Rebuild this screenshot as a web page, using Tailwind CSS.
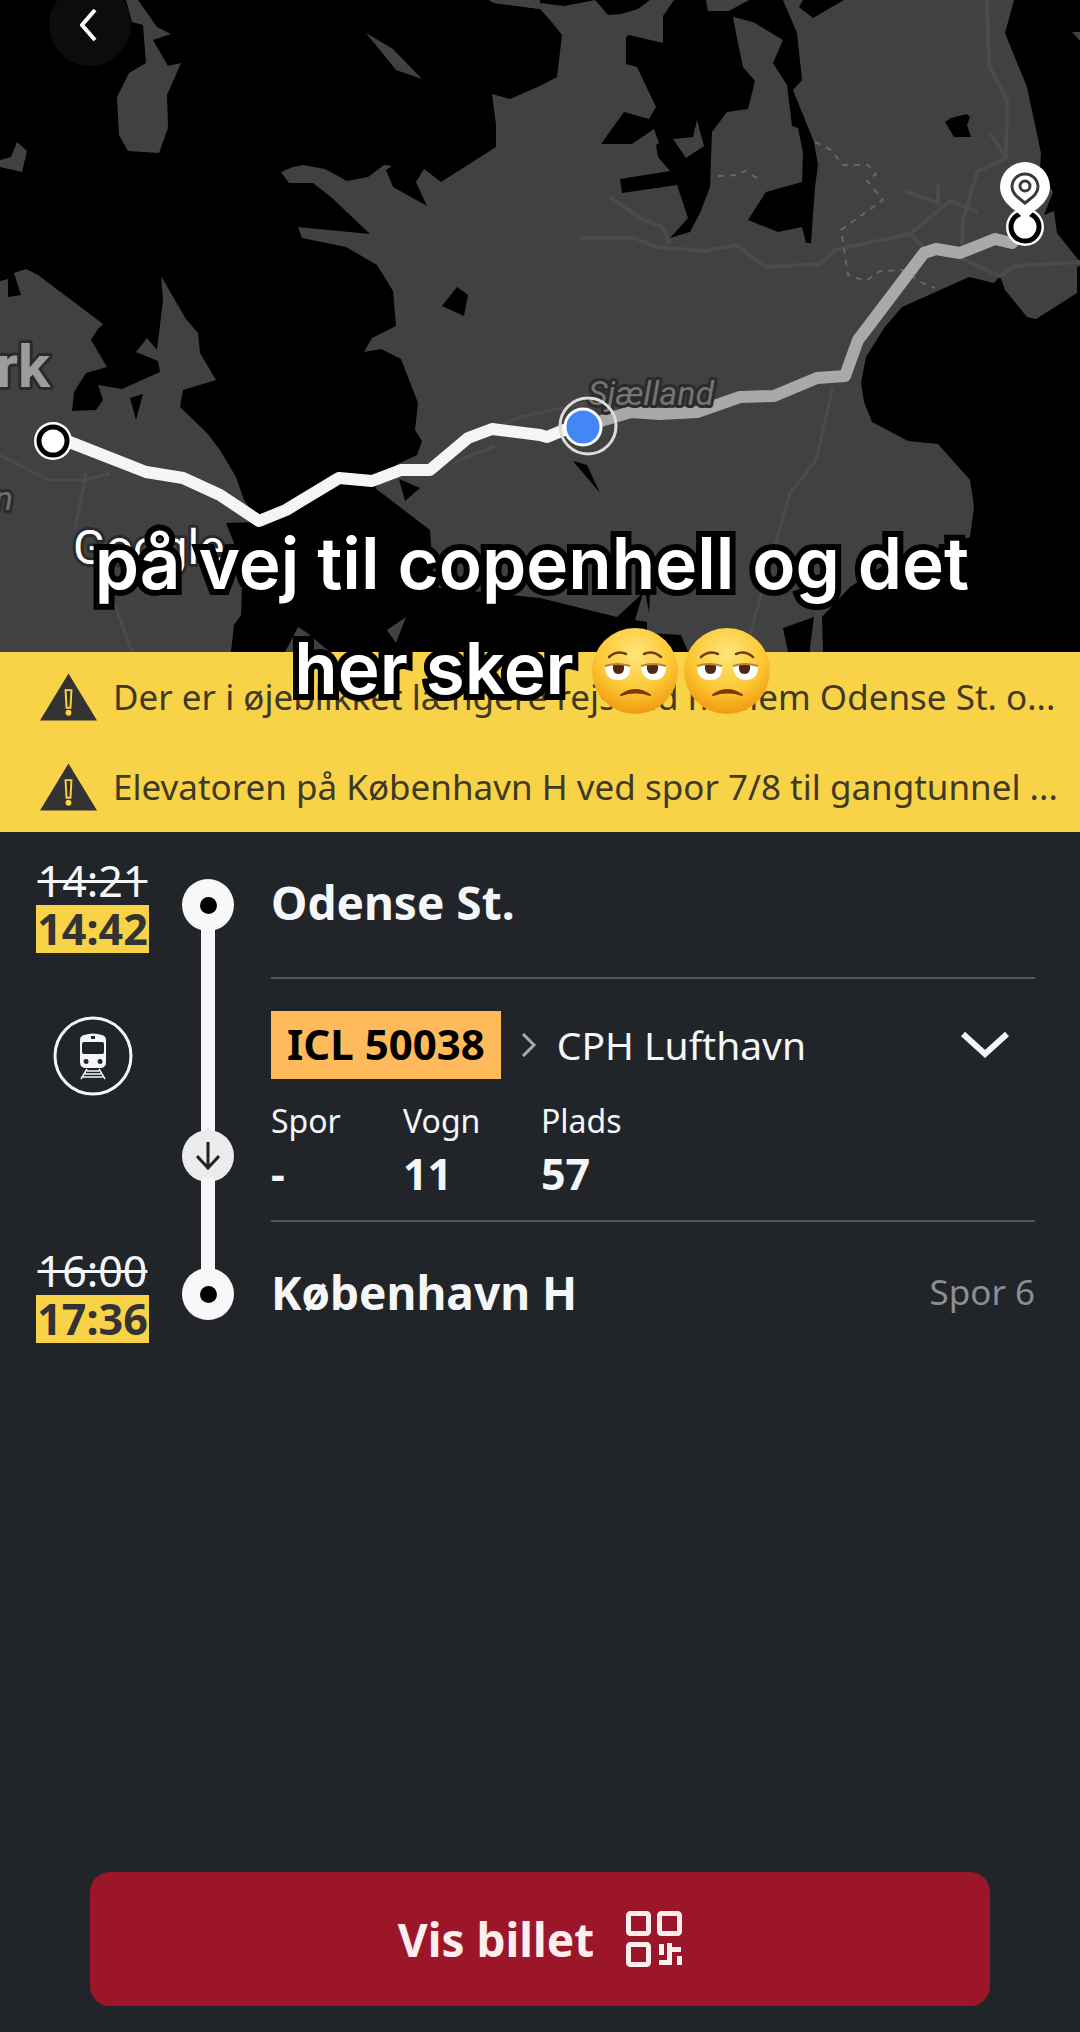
<!DOCTYPE html>
<html lang="da">
<head>
    <meta charset="UTF-8">
    <meta name="viewport" content="width=device-width, initial-scale=1.0">
    <title>Odense St. - København H</title>
    <script src="https://cdn.jsdelivr.net/npm/@tailwindcss/browser@4"></script>
</head>
<body class="bg-[#212529] text-[#f5f6f8] font-['Noto_Sans',sans-serif]">
    <div class="relative min-h-screen flex flex-col overflow-hidden">

        <!-- Map -->
        <header class="relative">
            <svg class="block w-full h-[652px]" viewBox="0 0 1080 652" preserveAspectRatio="xMidYMid slice" role="img" aria-label="Kort over rejsen">
                <rect width="1080" height="652" fill="#414141"/>

                <!-- Water -->
                <g fill="#000">
                    <path d="M0 0H489L494 3L540 9L550 20L562 35L557 77L540 86L510 99L492 94L496 125V147L441 182L424 169L416 182L427 206L393 187L386 170L392 166L384 165L368 177L347 181L325 169L303 165L293 167L281 172L289 183L313 183L331 197L370 234L298 227L302 238L346 247L377 265L393 291L396 326L372 338L364 352L381 349L401 359L418 403L415 430L422 441L417 455L396 465L375 488L430 530L434 587L540 598L617 617L643 593L635 620L647 622V633L681 635L688 652H231L234 625L241 615L242 587L234 543L226 523L259 522L244 500L236 477L220 450L207 433L180 407L183 390L216 380L200 353L198 333L186 319L161 276L163 300L157 350L147 338L136 352L158 361L160 372L122 389L98 385L103 400L96 410L72 411L74 392L86 373L107 367L91 340L98 329L103 324L38 275L26 269L14 273L21 295L8 297V279L0 281Z"/>
                    <path d="M540 0V3L564 6L595 0L608 15L621 14L638 9L650 0Z"/>
                    <path d="M674 0L663 16V43L629 35L626 37V64L637 67L656 107L649 119L624 112L601 144H632L654 129L659 143L656 145L658 157L670 171L620 179L622 193L677 185L688 218L670 238L690 232L700 213L710 187L712 132L727 112L748 109L755 81L743 67L738 43L733 17L753 22L783 40L773 63L787 85L792 126L798 128L803 153L802 182L766 192L748 220L778 232L802 227L806 243H811L815 187L818 165L814 142L793 90L802 80L797 33L783 0H749L729 11H708L706 0Z"/>
                    <path d="M803 0L799 7L813 18L844 0Z"/>
                    <path d="M945 122L951 118L967 114L970 117L967 125L971 137H954Z"/>
                    <path d="M1014 0L1005 33L1027 87L1041 153L1040 170L1053 192L1044 215L1054 211L1057 233L1080 262V0Z"/>
                    <path d="M1080 266L1077 267V293L1036 319L1027 317L1005 290L1000 276L994 283L969 277L902 307L884 328L866 357L861 383L864 402L872 422L908 441L938 444L970 480L974 507L970 537L881 567L850 587L822 617L823 652H1080Z"/>
                    <path d="M783 628L814 617L810 648V652H788Z"/>
                    <path d="M457 287L468 295L464 316L442 306Z"/>
                    <path d="M130 398L143 394L136 420Z"/>
                    <path d="M399 479L420 488L405 501Z"/>
                    <path d="M573 461L587 465L600 493Z"/>
                    <path d="M645 590H650L649 613Z"/>
                </g>

                <!-- Islands -->
                <g fill="#414141">
                    <path d="M126 0L132 22L143 25L146 63L129 73L117 97L119 135L128 151L159 153L168 128L167 95L181 63L168 66L153 40L171 34L157 27L138 0Z"/>
                    <path d="M17 142L27 151L22 172L0 167V160L11 157Z"/>
                    <path d="M366 33L393 49L422 79L396 70Z"/>
                    <path d="M489 0L494 3L540 9V0Z"/>
                    <path d="M673 139L693 137L697 120L704 146L686 158Z"/>
                    <path d="M1072 32H1080V41Z"/>
                    <path d="M285 652L298 627L306 632L330 652Z"/>
                    <path d="M387 630L406 617L396 643Z"/>
                </g>

                <!-- Roads and municipal borders -->
                <g fill="none" stroke="#4b4b4b" stroke-width="4" stroke-linejoin="round">
                    <path d="M580 238H635L655 247L705 251L736 245L766 267L820 264L835 250L910 234L950 201L978 212M610 197L640 218L662 227L670 243"/>
                    <path d="M987 0L989 66L1007 100L1006 158L977 172L963 220L962 245M990 133L1006 158M905 191L938 203V185M910 234L926 250M960 258L1000 276L1014 266L1080 262"/>
                    <path d="M833 387L816 460L790 493L775 545L750 635M0 455L48 480H86L110 473M86 473L75 530M115 605L132 652M492 429L520 417L600 400M455 462L495 446" stroke-width="3"/>
                </g>
                <g fill="none" stroke="#666" stroke-width="2" stroke-dasharray="6 6">
                    <path d="M815 142L831 150L843 165L868 165L876 174L867 181L883 200L841 230L848 275L866 281L880 271L903 270L920 282L935 288"/>
                    <path d="M718 176L738 175L745 171L762 181"/>
                </g>

                <!-- Route -->
                <g fill="none" stroke-width="12" stroke-linejoin="round">
                    <path stroke="#a9a9a9" d="M584 428L604 420L631 412L660 414L697 412L740 397L774 396L817 378L845 376L858 340L877 315L924 253L936 249L960 253L995 239L1012 243L1025 228"/>
                    <path stroke="#f5f5f5" d="M53 436L72 443L146 472L183 478L220 495L259 521L286 510L339 478L372 481L401 470H430L468 438L492 429L540 435L547 437L564 430L583 428"/>
                </g>

                <!-- Place names -->
                <g font-family="Roboto, sans-serif" stroke="#2b2b2b" stroke-width="6" stroke-linejoin="round" paint-order="stroke">
                    <text x="50" y="387" font-size="60" font-weight="700" text-anchor="end" fill="#9c9c9c">rk</text>
                    <text x="13" y="510" font-size="34" font-style="italic" text-anchor="end" fill="#6f6f6f">n</text>
                    <text x="588" y="405" font-size="34" font-style="italic" fill="#747474">Sjælland</text>
                    <text x="73" y="564" font-size="48" fill="#fff">Google</text>
                </g>

                <!-- Stops -->
                <g fill="#fff">
                    <circle cx="53" cy="441" r="19"/>
                    <circle cx="53" cy="441" r="14" stroke="#000" stroke-width="5"/>
                    <circle cx="1025" cy="227" r="19"/>
                    <circle cx="1025" cy="227" r="14" stroke="#000" stroke-width="5"/>
                    <path d="M1025 162a25 25 0 0 1 25 25c0 12-10 20-17 25l-8 8-8-8c-7-5-17-13-17-25a25 25 0 0 1 25-25z"/>
                </g>
                <g fill="none" stroke="#3a3a3a" stroke-width="3">
                    <path d="M1025 174a13 13 0 0 1 13 13c0 7-7 11-13 16-6-5-13-9-13-16a13 13 0 0 1 13-13z"/>
                    <circle cx="1025" cy="186" r="5"/>
                </g>

                <!-- Current position -->
                <circle cx="588" cy="426" r="28" fill="none" stroke="#dcdcdc" stroke-width="3"/>
                <circle cx="583" cy="427" r="18" fill="#4287f5" stroke="#fff" stroke-width="3"/>
            </svg>

            <button type="button" aria-label="Tilbage" class="absolute left-[49px] -top-4 size-[82px] rounded-full bg-[#0c0c0f] flex items-center justify-center">
                <svg class="w-5 h-8" viewBox="0 0 20 32" fill="none" stroke="#fff" stroke-width="4">
                    <path d="M15 1L2 16L15 31"/>
                </svg>
            </button>
        </header>

        <!-- Traffic messages -->
        <ul class="bg-[#f8d348] text-[#3f3a26] text-[35px]">
            <li class="h-[90px] pl-10 pr-2 flex items-center gap-4">
                <svg class="w-[57px] h-12 shrink-0" viewBox="0 0 58 48">
                    <path d="M29 0L58 48H0Z" fill="#333"/>
                    <path d="M26 17h6l-1 18h-4z" fill="none" stroke="#f8d348" stroke-width="2"/>
                    <circle cx="29" cy="40" r="3" fill="#f8d348"/>
                </svg>
                <a href="#" class="truncate">Der er i øjeblikket længere rejsetid mellem Odense St. o...</a>
            </li>
            <li class="h-[90px] pl-10 pr-2 flex items-center gap-4">
                <svg class="w-[57px] h-12 shrink-0" viewBox="0 0 58 48">
                    <path d="M29 0L58 48H0Z" fill="#333"/>
                    <path d="M26 17h6l-1 18h-4z" fill="none" stroke="#f8d348" stroke-width="2"/>
                    <circle cx="29" cy="40" r="3" fill="#f8d348"/>
                </svg>
                <a href="#" class="truncate">Elevatoren på København H ved spor 7/8 til gangtunnel ...</a>
            </li>
        </ul>

        <!-- Journey -->
        <main class="flex-1 pl-9 pr-[45px]">
            <div class="grid grid-cols-[113px_52px_1fr] grid-rows-[145px_245px_145px]">
                <div class="col-start-1 row-start-1 self-center flex flex-col items-center text-[43px] leading-[48px]">
                    <s class="decoration-3">14:21</s>
                    <strong class="w-full text-center bg-[#f8d348] text-[#333]">14:42</strong>
                </div>
                <div class="col-start-1 row-start-2 pt-[39px] flex justify-center">
                    <svg class="size-20" viewBox="0 0 80 80" role="img" aria-label="Tog">
                        <circle cx="40" cy="40" r="38" fill="none" stroke="#f5f6f8" stroke-width="3"/>
                        <path fill="#f5f6f8" fill-rule="evenodd" d="M31 19q9-3 18 0q4 1 4 5v22q0 6-6 6H33q-6 0-6-6V24q0-4 4-5zM38 20v3h4v-3zM31 26q-2 0-2 2v8q0 2 2 2h18q2 0 2-2v-8q0-2-2-2zM33 43a2 2 0 1 0 0.100 5a2 2 0 1 0-.100-5zM47 43a2 2 0 1 0 0.100 5a2 2 0 1 0-.100-5z"/>
                        <path d="M34 53L28 63M46 53L52 63M34 55H46M32 58H48M30 61H50" fill="none" stroke="#f5f6f8" stroke-width="1.500"/>
                    </svg>
                </div>
                <div class="col-start-1 row-start-3 self-center flex flex-col items-center text-[43px] leading-[48px]">
                    <s class="decoration-3">16:00</s>
                    <strong class="w-full text-center bg-[#f8d348] text-[#333]">17:36</strong>
                </div>

                <!-- Line with stops -->
                <div class="col-start-2 row-start-1 row-span-3 w-[52px] ml-[33px] py-[47px] flex flex-col items-center">
                    <span class="size-[52px] rounded-full bg-[#f8f8f8] flex items-center justify-center"><span class="size-[17px] rounded-full bg-black"></span></span>
                    <span class="-my-1 flex-1 w-[14px] bg-[#f8f8f8]"></span>
                    <span class="size-[52px] rounded-full bg-[#ececee] flex items-center justify-center">
                        <svg class="w-6 h-7" viewBox="0 0 24 28" fill="none" stroke="#222" stroke-width="3">
                            <path d="M12 0V26M1 14L12 26L23 14"/>
                        </svg>
                    </span>
                    <span class="-my-1 h-[94px] w-[14px] bg-[#f8f8f8]"></span>
                    <span class="size-[52px] rounded-full bg-[#f8f8f8] flex items-center justify-center"><span class="size-[17px] rounded-full bg-black"></span></span>
                </div>

                <h2 class="col-start-3 row-start-1 ml-[70px] pb-1 self-center text-[46px] font-bold">Odense St.</h2>

                <section class="col-start-3 row-start-2 ml-[70px] border-y-2 border-[#54575b] pt-8">
                    <div class="flex items-center">
                        <strong class="h-[68px] px-4 bg-[#ffba5c] text-black text-[42px] leading-[66px]">ICL 50038</strong>
                        <svg class="ml-5 w-4 h-6" viewBox="0 0 16 24" fill="none" stroke="#a6a8ab" stroke-width="3">
                            <path d="M2 1L13 12L2 23"/>
                        </svg>
                        <span class="ml-5 text-[39px] leading-[66px]">CPH Lufthavn</span>
                        <button type="button" aria-label="Vis stop" class="ml-auto mr-[26px]">
                            <svg class="w-12 h-7" viewBox="0 0 48 28" fill="none" stroke="#f5f6f8" stroke-width="6">
                                <path d="M2 3L24 23L46 3"/>
                            </svg>
                        </button>
                    </div>
                    <dl class="mt-4 grid grid-cols-[132px_138px_1fr]">
                        <div>
                            <dt class="text-[32px] leading-[52px]">Spor</dt>
                            <dd class="text-[43px] leading-[54px] font-bold">-</dd>
                        </div>
                        <div>
                            <dt class="text-[32px] leading-[52px]">Vogn</dt>
                            <dd class="text-[43px] leading-[54px] font-bold">11</dd>
                        </div>
                        <div>
                            <dt class="text-[32px] leading-[52px]">Plads</dt>
                            <dd class="text-[43px] leading-[54px] font-bold">57</dd>
                        </div>
                    </dl>
                </section>

                <div class="col-start-3 row-start-3 ml-[70px] pb-1 flex items-center justify-between">
                    <h2 class="text-[46px] font-bold">København H</h2>
                    <span class="text-[35px] text-[#8b8e92]">Spor 6</span>
                </div>
            </div>
        </main>

        <footer class="px-[90px] pb-[26px]">
            <button type="button" class="w-full h-[134px] rounded-[20px] bg-[#9c162a] text-[#fdeeee] text-[46px] font-bold flex items-center justify-center gap-8">
                Vis billet
                <svg class="size-14" viewBox="0 0 56 56" fill="none" stroke="#fdeeee" stroke-width="5">
                    <rect x="2.500" y="2.500" width="20" height="20" rx="2"/>
                    <rect x="33.500" y="2.500" width="20" height="20" rx="2"/>
                    <rect x="2.500" y="33.500" width="20" height="20" rx="2"/>
                    <path d="M35.500 33V44M33 51.500H43.500V32M43 38.500H55M53.500 45V54" stroke-width="5"/>
                </svg>
            </button>
        </footer>

        <!-- Caption -->
        <p class="absolute inset-x-0 top-[511px] pr-4 text-center font-['Inter',sans-serif] font-semibold text-[71px] leading-[105px] text-white [-webkit-text-stroke:12px_#000] [paint-order:stroke] [stroke-linejoin:round]">
            på vej til copenhell og det<br>
            her sker
            <svg class="inline-block align-middle mb-2 w-[178px] h-[86px]" viewBox="0 0 178 86" role="img" aria-label="To trætte ansigter">
                <defs>
                    <radialGradient id="skin" cx="50%" cy="30%" r="75%">
                        <stop offset="0" stop-color="#ffe57a"/>
                        <stop offset=".55" stop-color="#fdc937"/>
                        <stop offset="1" stop-color="#ee9209"/>
                    </radialGradient>
                    <g id="face">
                        <circle cx="43" cy="43" r="43" fill="url(#skin)"/>
                        <path d="M17 29q8-7 17-3M52 26q9-4 17 3" fill="none" stroke="#6b3d12" stroke-width="2.500" stroke-linecap="round"/>
                        <path d="M13 38q12-3 25 0q1 14-12 14T13 38zM49 38q12-3 25 0q0 14-12 14T49 38z" fill="#fff"/>
                        <path d="M21 37h11q1 9-5.500 9T21 37zM55 37h11q1 9-5.500 9T55 37z" fill="#552513"/>
                        <path d="M13 38q12-4 25 0M49 38q12-4 25 0" fill="none" stroke="#b8862e" stroke-width="2"/>
                        <path d="M29 67q14-10 29 0q-14-5-29 0z" fill="#7a3a0c" stroke="#7a3a0c" stroke-width="2" stroke-linejoin="round"/>
                    </g>
                </defs>
                <use href="#face"/>
                <use href="#face" x="92"/>
            </svg>
        </p>
    </div>
</body>
</html>
